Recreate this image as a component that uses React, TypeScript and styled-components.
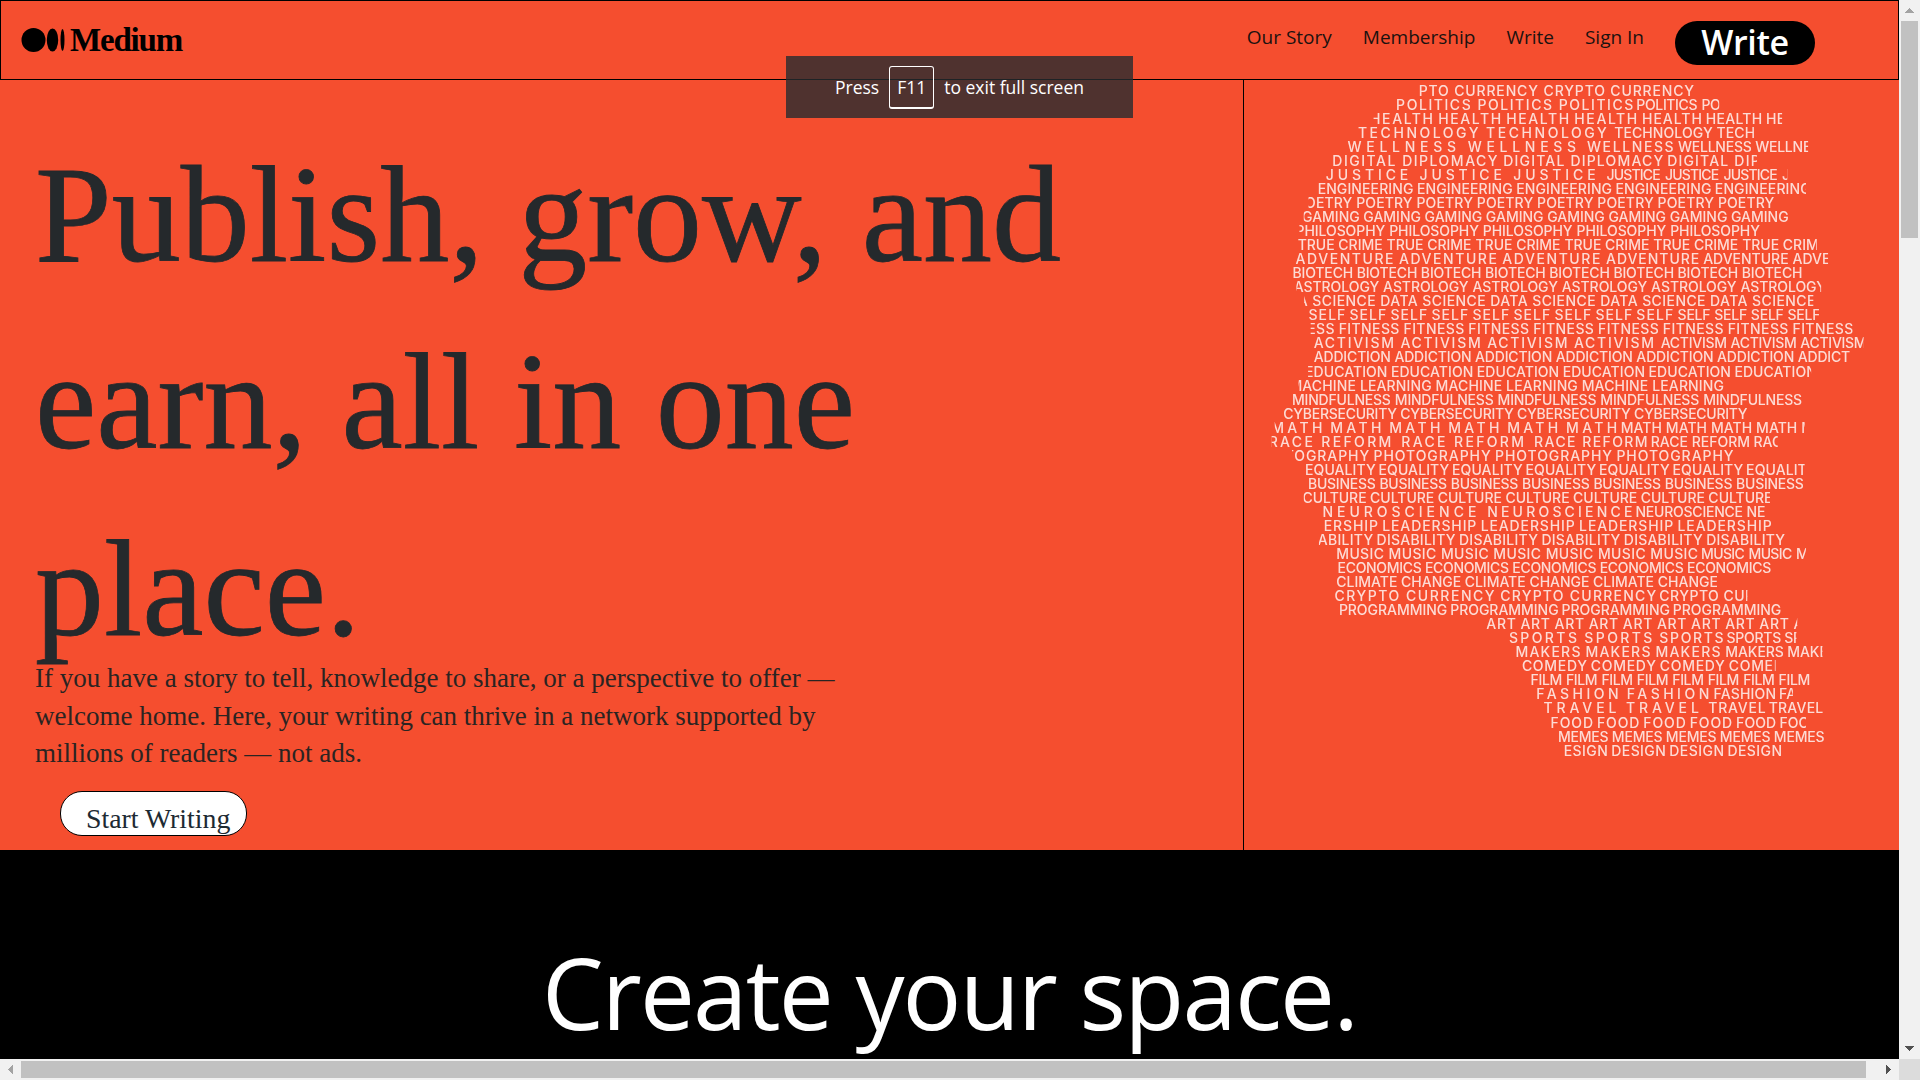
import React from 'react'
import styled, { createGlobalStyle } from 'styled-components'

const GlobalStyle = createGlobalStyle`
  html, body {
    height: 100%;
    margin: 0;
    overflow: hidden;
  }
`

const Screen = styled.div`
  display: grid;
  grid-template-columns: 1899px 21px;
  grid-template-rows: 1059px 21px;
  height: 1080px;
  overflow: hidden;
  position: relative;
  width: 1920px;
`

const Page = styled.main`
  background-color: #000;
  display: flex;
  flex-direction: column;
  overflow: hidden;
`

const Header = styled.header`
  align-items: center;
  background-color: #f54e2f;
  border: 1px solid #000;
  box-sizing: border-box;
  display: flex;
  flex: none;
  height: 80px;
  justify-content: space-between;
  padding: 0 83px 0 20px;
`

const Logo = styled.div`
  align-items: center;
  display: flex;
  gap: 1px;
`

const Wordmark = styled.span`
  color: #000;
  font-family: 'Liberation Serif', serif;
  font-size: 33px;
  font-weight: 700;
  letter-spacing: -1.2px;
`

const Nav = styled.nav`
  align-items: center;
  display: flex;
`

const NavLink = styled.a`
  color: #1b1210;
  font-family: 'Open Sans', sans-serif;
  font-size: 19px;
  margin-bottom: 6px;
  margin-right: 31px;
`

const WriteButton = styled.a`
  background-color: #000;
  border-radius: 22px;
  color: #fff;
  font-family: 'Open Sans', sans-serif;
  font-size: 34px;
  font-weight: 600;
  height: 44px;
  letter-spacing: -0.4px;
  line-height: 42px;
  margin-top: 6px;
  text-align: center;
  width: 140px;
`

const Hero = styled.section`
  background-color: #f54e2f;
  display: grid;
  flex: none;
  grid-template-columns: 1243px 1fr;
  height: 770px;
`

const Intro = styled.div`
  padding: 41px 0 0 35px;
`

const Headline = styled.h1`
  color: #25292c;
  font-family: 'Liberation Serif', serif;
  font-size: 138px;
  font-weight: 400;
  line-height: 187px;
  margin: 0 0 -22px;
  -webkit-text-stroke: 0.8px #25292c;
  width: 1100px;
`

const Lead = styled.p`
  color: #2a2422;
  font-family: 'Liberation Serif', serif;
  font-size: 27px;
  line-height: 37.5px;
  margin: 0;
  position: relative;
  width: 860px;
`

const StartButton = styled.a`
  background-color: #fff;
  border: 1px solid #000;
  border-radius: 22px;
  box-sizing: border-box;
  color: #1d2a33;
  display: block;
  font-family: 'Liberation Serif', serif;
  font-size: 27.8px;
  height: 45px;
  line-height: 53px;
  margin: 18px 0 0 25px;
  overflow: hidden;
  padding-left: 25px;
  white-space: nowrap;
  width: 187px;
`

const CloudPane = styled.div`
  border-left: 1px solid #000;
`

const Cloud = styled.svg`
  display: block;
  filter: blur(0.3px);
  font-family: Inter, sans-serif;
  font-size: 14px;
  font-weight: 500;
`

const Banner = styled.section`
  background-color: #000;
  flex: 1;
  overflow: hidden;
`

const BannerTitle = styled.h2`
  color: #fff;
  font-family: 'Open Sans', sans-serif;
  font-size: 98px;
  font-weight: 400;
  letter-spacing: -1.9px;
  line-height: 140px;
  margin: 0;
  padding-top: 72px;
  text-align: center;
`

const Toast = styled.div`
  align-items: center;
  background-color: rgba(38, 44, 48, 0.8);
  color: #fff;
  display: flex;
  font-family: 'Open Sans', sans-serif;
  font-size: 17.5px;
  gap: 10px;
  height: 62px;
  justify-content: center;
  left: 786px;
  position: absolute;
  top: 56px;
  width: 347px;
`

const Key = styled.span`
  align-items: center;
  border: 1px solid #fff;
  border-bottom-width: 2px;
  border-radius: 3px;
  box-sizing: border-box;
  display: flex;
  height: 43px;
  justify-content: center;
  width: 45px;
`

const VerticalBar = styled.div`
  background-color: #f1f1f1;
  display: flex;
  flex-direction: column;
`

const HorizontalBar = styled.div`
  background-color: #f1f1f1;
  display: flex;
`

const Track = styled.div<{ $vertical?: boolean }>`
  display: flex;
  flex: 1;
  flex-direction: ${p => (p.$vertical ? 'column' : 'row')};
  padding: ${p => (p.$vertical ? '0 2px' : '2px 0')};
`

const Thumb = styled.div<{ $size: number; $vertical?: boolean }>`
  background-color: #c1c1c1;
  ${p => (p.$vertical ? `height: ${p.$size}px;` : `width: ${p.$size}px;`)}
  ${p => (p.$vertical ? 'width: 100%;' : 'height: 100%;')}
`

const ArrowButton = styled.div`
  align-items: center;
  display: flex;
  flex: none;
  height: 21px;
  justify-content: center;
  width: 21px;
`

const Corner = styled.div`
  background-color: #dcdcdc;
`

const Arrow = ({ points, fill }: { points: string; fill: string }) => (
  <ArrowButton>
    <svg width="9" height="9" viewBox="0 0 9 9" shapeRendering="crispEdges">
      <polygon points={points} fill={fill} />
    </svg>
  </ArrowButton>
)

const MediumMark = () => (
  <svg width="48" height="26" viewBox="0 0 48 26">
    <circle cx="12.5" cy="13" r="12" fill="#000" />
    <ellipse cx="31.5" cy="13" rx="5.7" ry="11.5" fill="#000" />
    <ellipse cx="41.5" cy="13" rx="2" ry="11" fill="#000" />
  </svg>
)

// x values traced from crops of the word figure: 1568 units = 680px
const unit = 680 / 1568
const offset = -4

type Run = [start: number, pitch: number, length: number, count: number]
type Row = [word: string, left: number, right: number, runs: Run[]]

const rows: Row[] = [
  ['CRYPTO CURRENCY', 413, 1047, [[340, 360, 347, 2]]],
  ['POLITICS', 360, 1105, [[360, 187.5, 172, 3], [914, 150, 141, 2]]],
  ['HEALTH', 308, 1250, [[300, 157, 145, 4], [927, 147, 138, 1], [1074, 139, 130, 2]]],
  ['TECHNOLOGY', 272, 1185, [[272, 295.5, 278, 2], [863, 236, 227, 2]]],
  ['WELLNESS', 248, 1310, [[248, 277, 250, 2], [800, 210, 200, 1], [1010, 178, 170, 2]]],
  ['DIGITAL DIPLOMACY', 213, 1192, [[213, 394, 381, 1], [607, 378, 369, 2]]],
  ['JUSTICE', 198, 1262, [[198, 216, 190, 3], [845, 135, 125, 4]]],
  ['ENGINEERING', 180, 1305, [[179, 229, 221, 5]]],
  ['POETRY', 158, 1235, [[129, 139, 130, 8]]],
  ['GAMING', 147, 1268, [[143, 141.3, 133, 8]]],
  ['PHILOSOPHY', 137, 1200, [[128, 216, 207, 5]]],
  ['TRUE CRIME', 133, 1330, [[133, 205, 196, 6]]],
  ['ADVENTURE', 128, 1356, [[128, 238.5, 226, 3], [844, 224, 215, 1], [1068, 206, 197, 2]]],
  ['BIOTECH', 122, 1297, [[121, 148, 140, 8]]],
  ['ASTROLOGY', 130, 1340, [[124, 206, 197, 6]]],
  ['DATA SCIENCE', 148, 1322, [[70, 253.5, 243, 5]]],
  ['SELF', 158, 1335, [[158, 94.5, 85, 9], [1009, 84.5, 76, 4]]],
  ['FITNESS', 163, 1413, [[78, 149.5, 140, 9]]],
  ['ACTIVISM', 170, 1438, [[170, 200, 185, 4], [970, 161, 153, 3]]],
  ['ADDICTION', 170, 1408, [[170, 186, 178, 7]]],
  ['EDUCATION', 157, 1317, [[150, 198, 190, 6]]],
  ['MACHINE LEARNING', 135, 1117, [[114, 337, 328, 3]]],
  ['MINDFULNESS', 120, 1297, [[120, 237, 228, 5]]],
  ['CYBERSECURITY', 100, 1170, [[100, 269.5, 262, 4]]],
  ['MATH', 80, 1302, [[72, 136, 118, 6], [878, 104, 95, 5]]],
  ['RACE REFORM', 73, 1240, [[66, 306, 283, 2], [678, 269, 262, 1], [947, 237, 229, 2]]],
  ['PHOTOGRAPHY', 120, 1138, [[28, 280, 270, 4]]],
  ['EQUALITY', 150, 1302, [[150, 169.5, 163, 7]]],
  ['BUSINESS', 157, 1302, [[157, 164.5, 156, 7]]],
  ['CULTURE', 147, 1222, [[144, 156, 148, 7]]],
  ['NEUROSCIENCE', 190, 1212, [[190, 380, 355, 1], [570, 342, 335, 1], [912, 256, 248, 2]]],
  ['LEADERSHIP', 193, 1225, [[101, 227, 217, 5]]],
  ['DISABILITY', 182, 1257, [[125, 190, 182, 6]]],
  ['MUSIC', 222, 1305, [[222, 120.7, 110, 7], [1063, 109.5, 101, 3]]],
  ['ECONOMICS', 225, 1225, [[225, 201.5, 194, 5]]],
  ['CLIMATE CHANGE', 222, 1100, [[222, 296, 288, 3]]],
  ['CRYPTO CURRENCY', 218, 1170, [[218, 382, 369, 1], [600, 367, 360, 1], [967, 345, 335, 1]]],
  ['PROGRAMMING', 228, 1248, [[228, 256.7, 250, 4]]],
  ['ART', 568, 1285, [[568, 78.7, 68, 10]]],
  ['SPORTS', 620, 1283, [[620, 174, 157, 2], [967, 155, 148, 1], [1122, 133, 126, 2]]],
  ['MAKERS', 635, 1343, [[635, 161.5, 150, 3], [1119, 143, 135, 2]]],
  ['COMEDY', 650, 1235, [[650, 159, 150, 4]]],
  ['FILM', 670, 1315, [[670, 81.7, 73, 8]]],
  ['FASHION', 683, 1275, [[683, 209, 190, 2], [1092, 151, 144, 2]]],
  ['TRAVEL', 700, 1350, [[700, 190, 168, 2], [1080, 139, 132, 1], [1219, 133, 126, 2]]],
  ['FOOD', 716, 1305, [[716, 107, 98, 4], [1144, 100, 92, 2]]],
  ['MEMES', 733, 1348, [[733, 124.5, 117, 5]]],
  ['DESIGN', 746, 1250, [[722, 134, 126, 4]]],
]

const WordCloud = () => (
  <Cloud width="655" height="770" viewBox="0 0 655 770">
    {rows.map(([word, left, right, runs], i) => (
      <svg
        key={i}
        x={left * unit + offset}
        y={2.7 + i * 14.04}
        width={(right - left) * unit}
        height="16"
      >
        {runs.flatMap(([start, pitch, length, count], r) =>
          Array.from({ length: count }, (_, n) => (
            <text
              key={`${r}-${n}`}
              x={(start + n * pitch - left) * unit}
              y="13"
              fill="rgba(255, 255, 255, 0.8)"
              textLength={length * unit}
              lengthAdjust="spacing"
            >
              {word}
            </text>
          ))
        )}
      </svg>
    ))}
  </Cloud>
)

export default function App() {
  return (
    <Screen>
      <GlobalStyle />
      <Page>
        <Header>
          <Logo>
            <MediumMark />
            <Wordmark>Medium</Wordmark>
          </Logo>
          <Nav>
            <NavLink>Our Story</NavLink>
            <NavLink>Membership</NavLink>
            <NavLink>Write</NavLink>
            <NavLink>Sign In</NavLink>
            <WriteButton>Write</WriteButton>
          </Nav>
        </Header>
        <Hero>
          <Intro>
            <Headline>Publish, grow, and earn, all in one place.</Headline>
            <Lead>
              If you have a story to tell, knowledge to share, or a perspective to offer — welcome
              home. Here, your writing can thrive in a network supported by millions of readers —
              not ads.
            </Lead>
            <StartButton>Start Writing</StartButton>
          </Intro>
          <CloudPane>
            <WordCloud />
          </CloudPane>
        </Hero>
        <Banner>
          <BannerTitle>Create your space.</BannerTitle>
        </Banner>
      </Page>
      <VerticalBar>
        <Arrow points="4.5,2 9,7 0,7" fill="#a3a3a3" />
        <Track $vertical>
          <Thumb $vertical $size={217} />
        </Track>
        <Arrow points="0,2 9,2 4.5,7" fill="#505050" />
      </VerticalBar>
      <HorizontalBar>
        <Arrow points="2,4.5 7,0 7,9" fill="#a3a3a3" />
        <Track>
          <Thumb $size={1845} />
        </Track>
        <Arrow points="2,0 7,4.5 2,9" fill="#505050" />
      </HorizontalBar>
      <Corner />
      <Toast>
        <span>Press</span>
        <Key>F11</Key>
        <span>to exit full screen</span>
      </Toast>
    </Screen>
  )
}
